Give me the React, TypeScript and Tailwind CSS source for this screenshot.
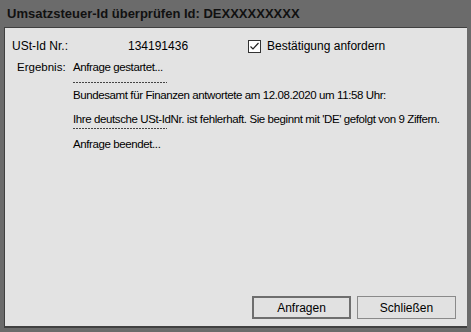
import React from 'react';

const Dashes: React.FC<{ className?: string }> = ({ className }) => (
    <div className={`h-[1px] w-[94px] bg-[repeating-linear-gradient(90deg,#444_0_2px,transparent_2px_3px)] ${className}`} />
);

const App: React.FC = () => {
    return (
        <div className="w-[471px] h-[332px] bg-[#6b6b6b] flex flex-col font-['Liberation_Sans',Arial,sans-serif] text-black">
            <div className="h-[27px] flex items-center px-[7px] font-bold text-[13px] text-[#111]">
                Umsatzsteuer-Id überprüfen Id: DEXXXXXXXXX
            </div>

            <div className="flex-1 mx-[4px] mb-[4px] bg-[#e3e3e3] border-l border-t border-b-2 border-[#404040] border-r-0 flex flex-col">
                <div className="flex items-center h-[20px] mt-[8px] text-[12px]">
                    <span className="w-[123px] pl-[7px]">USt-Id Nr.:</span>
                    <span className="w-[120px]">134191436</span>
                    <span className="w-[13px] h-[13px] border border-[#333] bg-white flex items-center justify-center">
                        <svg width="11" height="11" viewBox="0 0 11 11">
                            <path d="M1.5 5.5 L4 8 L9.5 2" fill="none" stroke="#222" strokeWidth="1.2" />
                        </svg>
                    </span>
                    <span className="ml-[6px]">Bestätigung anfordern</span>
                </div>

                <div className="flex mt-[4px] text-[11.5px] tracking-[-0.4px] leading-[14px]">
                    <span className="w-[68px] pl-[12px] tracking-normal">Ergebnis:</span>
                    <div className="flex flex-col whitespace-nowrap">
                        <span>Anfrage gestartet...</span>
                        <Dashes className="mt-[8px]" />
                        <span className="mt-[5px]">Bundesamt für Finanzen antwortete am 12.08.2020 um 11:58 Uhr:</span>
                        <span className="mt-[10px]">Ihre deutsche USt-IdNr. ist fehlerhaft. Sie beginnt mit 'DE' gefolgt von 9 Ziffern.</span>
                        <Dashes className="mt-[2px]" />
                        <span className="mt-[8px]">Anfrage beendet...</span>
                    </div>
                </div>

                <div className="mt-auto mb-[7px] flex justify-end gap-[6px] pr-[11px] text-[12px]">
                    <button className="w-[99px] h-[23px] bg-[#e1e1e1] border-2 border-[#6e6e6e]">Anfragen</button>
                    <button className="w-[99px] h-[23px] bg-[#e1e1e1] border border-[#8a8a8a]">Schließen</button>
                </div>
            </div>
        </div>
    );
};

export default App;
